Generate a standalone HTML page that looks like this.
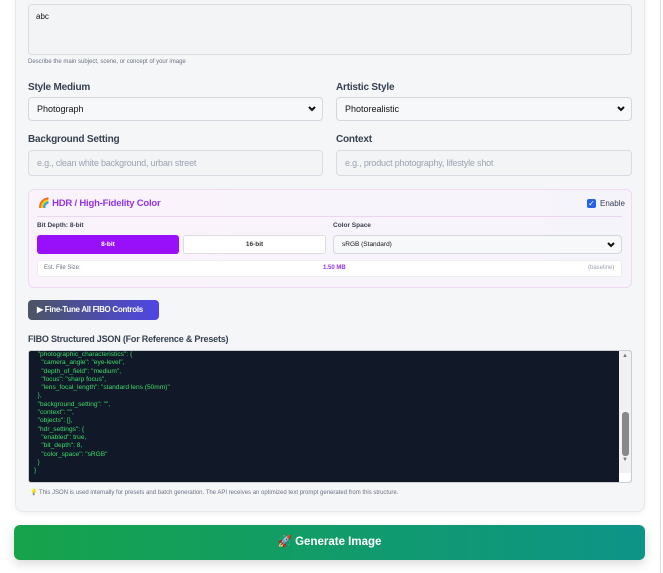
<!DOCTYPE html>
<html><head><style>
*{box-sizing:border-box;margin:0;padding:0}
body{width:663px;height:573px;overflow:hidden;background:#fff;font-family:"Liberation Sans",sans-serif;position:relative;color:#374151}
.card{position:absolute;left:15px;top:-20px;width:630px;height:532px;background:#f5f6f8;border:1px solid #e7e9ee;border-radius:8px;box-shadow:0 2px 6px rgba(0,0,0,.05)}
.a{position:absolute}
.box{background:#f3f4f6;border:1px solid #d9dce2;border-radius:4px}
.lbl{font-size:10px;font-weight:bold;color:#374151;letter-spacing:-.2px}
.sel{background:#f7f8fa;border:1px solid #d4d7dd;border-radius:4px;font-size:9px;color:#111;padding-left:8px;display:flex;align-items:center}
.chev{position:absolute;right:6px;top:50%;transform:translateY(-50%)}
.ph{color:#9ca3af;font-size:9px;padding-left:8px;display:flex;align-items:center;letter-spacing:-.2px}
pre{font-family:"Liberation Sans",sans-serif;font-size:6.6px;line-height:8.3px;color:#3ddc6a}
</style></head><body>
<div class="card"></div>
<div class="a box" style="left:28px;top:4px;width:604px;height:51px"></div>
<div class="a" style="left:36px;top:12px;font-size:8px;color:#111">abc</div>
<div class="a" style="left:28px;top:59px;font-size:6px;color:#6b7280">Describe the main subject, scene, or concept of your image</div>

<div class="a lbl" style="left:28px;top:82px">Style Medium</div>
<div class="a lbl" style="left:336px;top:82px">Artistic Style</div>
<div class="a sel" style="left:28px;top:97px;width:295px;height:24px">Photograph<svg class="chev" width="8" height="6" viewBox="0 0 8 6"><path d="M1 1l3 3 3-3" stroke="#111" stroke-width="2" fill="none"/></svg></div>
<div class="a sel" style="left:336px;top:97px;width:296px;height:24px">Photorealistic<svg class="chev" width="8" height="6" viewBox="0 0 8 6"><path d="M1 1l3 3 3-3" stroke="#111" stroke-width="2" fill="none"/></svg></div>

<div class="a lbl" style="left:28px;top:134px">Background Setting</div>
<div class="a lbl" style="left:336px;top:134px">Context</div>
<div class="a box ph" style="left:28px;top:150px;width:295px;height:26px">e.g., clean white background, urban street</div>
<div class="a box ph" style="left:336px;top:150px;width:296px;height:26px">e.g., product photography, lifestyle shot</div>

<div class="a" style="left:28px;top:189px;width:604px;height:99px;background:linear-gradient(90deg,#fbf3fc,#f6f4fb);border:1px solid #efd9f3;border-radius:6px"></div>
<div class="a" style="left:38px;top:198px;font-size:9.5px;font-weight:bold;color:#9333ea;letter-spacing:-.2px">🌈 HDR / High-Fidelity Color</div>
<div class="a" style="left:587px;top:199px;width:9px;height:9px;background:#2563eb;border-radius:2px;color:#fff;font-size:8px;line-height:9px;text-align:center">✓</div>
<div class="a" style="left:600px;top:199px;font-size:8px;color:#374151">Enable</div>
<div class="a" style="left:37px;top:216px;width:585px;height:1px;background:#ead6ef"></div>
<div class="a" style="left:37px;top:222px;font-size:6.5px;font-weight:bold;color:#374151">Bit Depth: 8-bit</div>
<div class="a" style="left:333px;top:222px;font-size:6.5px;font-weight:bold;color:#374151">Color Space</div>
<div class="a" style="left:37px;top:235px;width:142px;height:19px;background:#9810fa;border-radius:3px;color:#fff;font-size:6.5px;font-weight:bold;text-align:center;line-height:19px">8-bit</div>
<div class="a" style="left:183px;top:235px;width:143px;height:19px;background:#fff;border:1px solid #ddd;border-radius:3px;color:#333;font-size:6.5px;font-weight:bold;text-align:center;line-height:17px">16-bit</div>
<div class="a sel" style="left:333px;top:235px;width:289px;height:19px;font-size:6.5px">sRGB (Standard)<svg class="chev" width="8" height="6" viewBox="0 0 8 6"><path d="M1 1l3 3 3-3" stroke="#111" stroke-width="2" fill="none"/></svg></div>
<div class="a" style="left:37px;top:260px;width:585px;height:17px;background:#fff;border:1px solid #eee;border-radius:3px"></div>
<div class="a" style="left:44px;top:265px;font-size:6px;color:#6b7280">Est. File Size:</div>
<div class="a" style="left:323px;top:265px;font-size:6px;font-weight:bold;color:#9333ea">1.50 MB</div>
<div class="a" style="left:588px;top:265px;font-size:6px;color:#9ca3af">(baseline)</div>

<div class="a" style="left:28px;top:300px;width:131px;height:20px;border-radius:4px;background:linear-gradient(90deg,#4b5563,#4f46e5);color:#fff;font-size:8px;font-weight:bold;line-height:20px;padding-left:9px;letter-spacing:-.3px;white-space:nowrap;overflow:hidden">▶ Fine-Tune All FIBO Controls</div>

<div class="a" style="left:28px;top:334px;font-size:9px;color:#374151;font-weight:bold;letter-spacing:-.2px">FIBO Structured JSON (For Reference &amp; Presets)</div>
<div class="a" style="left:28px;top:350px;width:604px;height:133px;background:#111827;border:1px solid #ccc;border-radius:3px;overflow:hidden">
<pre style="position:absolute;left:5px;top:0px">  "photographic_characteristics": {
    "camera_angle": "eye-level",
    "depth_of_field": "medium",
    "focus": "sharp focus",
    "lens_focal_length": "standard lens (50mm)"
  },
  "background_setting": "",
  "context": "",
  "objects": [],
  "hdr_settings": {
    "enabled": true,
    "bit_depth": 8,
    "color_space": "sRGB"
  }
}</pre>
<div class="a" style="right:0;top:0;width:12px;height:122px;background:#f1f1f1"></div>
<div class="a" style="right:3px;top:2px;font-size:6px;color:#777">▲</div>
<div class="a" style="right:3px;top:106px;font-size:6px;color:#777">▼</div>
<div class="a" style="right:2px;top:61px;width:7px;height:44px;background:#888;border-radius:3px"></div>
<div class="a" style="right:0;top:122px;width:12px;height:11px;background:#fff"></div>
</div>
<div class="a" style="left:30px;top:489px;font-size:6px;color:#6b7280">💡 This JSON is used internally for presets and batch generation. The API receives an optimized text prompt generated from this structure.</div>

<div class="a" style="left:14px;top:525px;width:631px;height:35px;border-radius:6px;background:linear-gradient(90deg,#16a34a,#0d9488);box-shadow:0 4px 10px rgba(0,0,0,.15);color:#fff;font-size:11.5px;font-weight:bold;text-align:center;line-height:35px">🚀 Generate Image</div>
<div class="a" style="left:660px;top:0;width:1px;height:573px;background:#ddd"></div>
</body></html>
